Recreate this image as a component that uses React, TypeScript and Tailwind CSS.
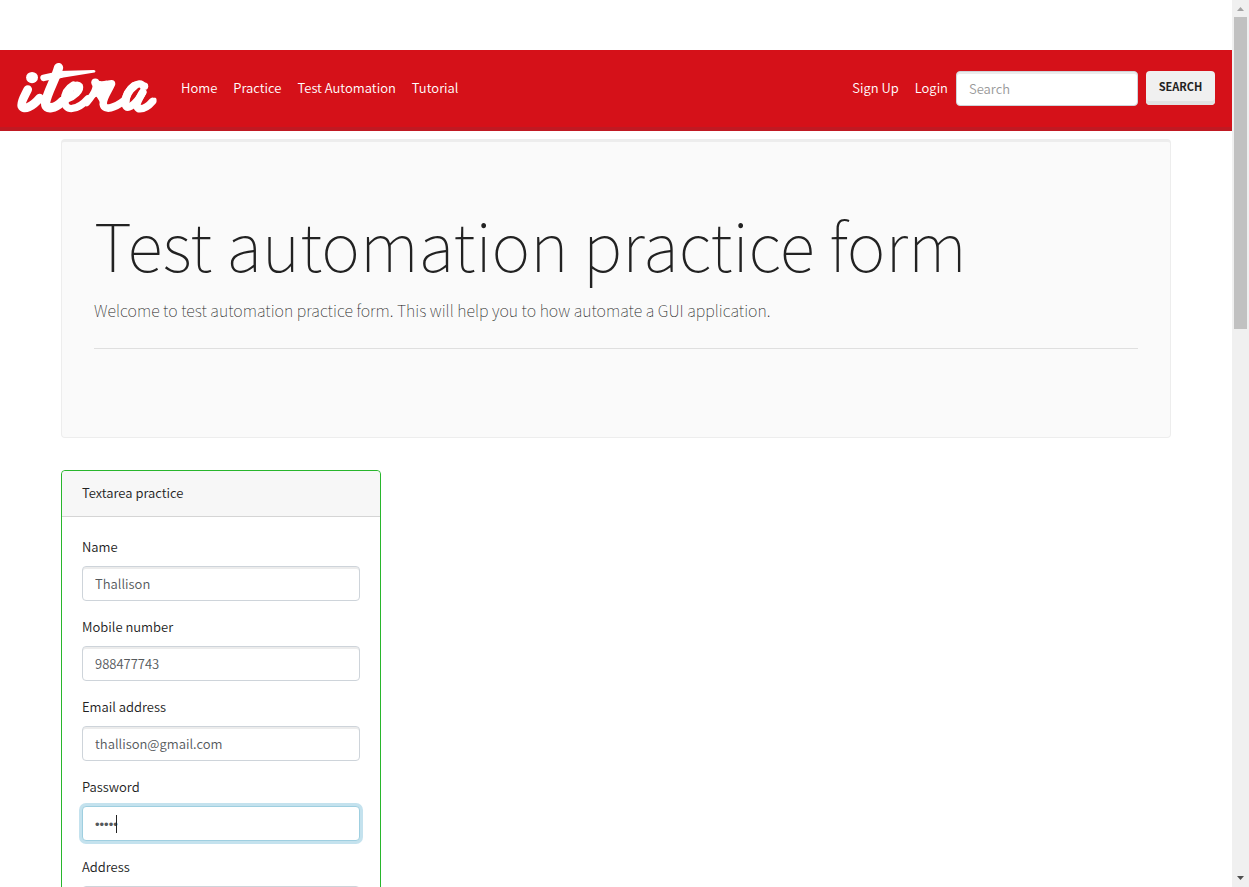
import React from "react";

const NAV_LINKS = ["Home", "Practice", "Test Automation", "Tutorial"];
const ACCOUNT_LINKS = ["Sign Up", "Login"];

const INPUT_CLASS =
  "block h-[35px] rounded border border-[#ced4da] bg-white px-3 text-[13px] text-[#55595c] shadow-[inset_0_2px_0_rgba(0,0,0,0.075)] outline-none placeholder:text-[#999] focus:border-[#9fcfe0] focus:shadow-[0_0_0_3px_rgba(21,140,186,0.25)]";

function Logo() {
  return (
    <svg viewBox="51 54 420 151" className="h-[50px] w-[140px]" role="img" aria-label="itera">
      <g fill="none" stroke="#fff" strokeLinecap="round" strokeLinejoin="round">
        <path strokeWidth="26" d="M82 134C74 152 60 172 64 184C70 198 96 186 118 160" />
        <path strokeWidth="28" d="M175 68C168 98 139 146 136 174C135 199 166 190 186 170" />
        <path strokeWidth="20" d="M130 99C147 94 160 92 180 90" />
        <path strokeWidth="22" d="M200 163C222 156 243 136 238 124C230 113 198 132 194 166C192 203 232 198 264 162" />
        <path strokeWidth="25" d="M194 168C194 145 204 131 220 122" />
        <path strokeWidth="21" d="M286 113C293 128 279 152 260 174" />
        <path strokeWidth="23" d="M298 133C309 124 322 117 335 117C328 134 308 160 310 178C314 200 345 190 376 166" />
        <path strokeWidth="22" d="M430 124C421 103 382 132 376 168C373 206 406 184 430 142" />
        <path strokeWidth="25" d="M377 176C376 155 388 134 404 123" />
        <path strokeWidth="23" d="M428 144C416 166 405 184 417 192C432 194 448 183 459 170" />
      </g>
      <g fill="#fff">
        <ellipse cx="95" cy="98" rx="18" ry="17" />
        <circle cx="286" cy="113" r="12" />
        <path d="M286 104Q300 112 320 107L338 120L300 172L290 156L280 160Z" />
        <circle cx="435" cy="124" r="11" />
        <path d="M175 78L282 75Q290 77 284 83L172 101Z" />
        <path d="M452 166L466 158Q473 160 470 168L453 186Z" />
      </g>
    </svg>
  );
}

function NavList({ labels }: { labels: string[] }) {
  return (
    <ul className="flex text-white">
      {labels.map((label) => (
        <li key={label}>
          <a href="#nav" className="block px-2 pb-[2px]">{label}</a>
        </li>
      ))}
    </ul>
  );
}

function Navbar() {
  return (
    <nav className="flex h-[81px] items-center bg-[#d51119] px-[17px] pb-1 shadow-[inset_0_-4px_0_#c01922]">
      <a href="#home" className="mr-4 pb-[2px]">
        <Logo />
      </a>
      <NavList labels={NAV_LINKS} />
      <div className="ml-auto">
        <NavList labels={ACCOUNT_LINKS} />
      </div>
      <form className="flex items-start gap-2" onSubmit={(e) => e.preventDefault()}>
        <input type="search" aria-label="Search" placeholder="Search" className={`${INPUT_CLASS} w-[182px]`} />
        <button
          type="submit"
          className="h-[34px] w-[69px] rounded bg-[#f0f0f0] pb-1 text-[11px] font-bold text-[#222] shadow-[inset_0_-4px_0_#e2e2e2]"
        >
          SEARCH
        </button>
      </form>
    </nav>
  );
}

type FieldProps = { id: string; label: string; type?: string; value?: string };

function Field({ id, label, type = "text", value = "" }: FieldProps) {
  return (
    <div className="mb-4">
      <label htmlFor={id} className="mb-[10px] block leading-[19px]">{label}</label>
      <input id={id} type={type} defaultValue={value} className={`${INPUT_CLASS} w-full`} />
    </div>
  );
}

function PasswordField() {
  return (
    <div className="mb-4">
      <label htmlFor="password" className="mb-[10px] block leading-[19px]">Password</label>
      <div className="relative">
        <input
          id="password"
          type="password"
          defaultValue="12345"
          autoFocus
          className={`${INPUT_CLASS} w-full pt-[2px] font-['Liberation_Sans',sans-serif] caret-transparent`}
        />
        <span aria-hidden="true" className="absolute top-[9px] left-[34px] h-[18px] w-px bg-[#222]" />
      </div>
    </div>
  );
}

function ScrollBar() {
  return (
    <div aria-hidden="true" className="flex w-[17px] shrink-0 flex-col items-center bg-[#f0f0f0]">
      <svg viewBox="0 0 17 17" className="h-[17px] w-[17px] shrink-0">
        <path d="M5 11L8.500 7L12 11Z" fill="#a3a3a3" />
      </svg>
      <div className="h-[312px] w-[13px] bg-[#c1c1c1]" />
      <svg viewBox="0 0 17 17" className="mt-auto h-[17px] w-[17px] shrink-0">
        <path d="M5 6L8.500 10L12 6Z" fill="#505050" />
      </svg>
    </div>
  );
}

export default function App() {
  return (
    <div className="flex h-screen overflow-hidden bg-white font-['Noto_Sans_CJK_SC','Noto_Sans',sans-serif] text-[13px] leading-[19px] font-[350] text-[#222]">
      <div className="min-w-0 flex-1 overflow-hidden pt-[50px]">
        <Navbar />
        <main className="mx-auto max-w-[1140px] px-[15px] pt-2">
          <header className="mb-8 rounded border border-t-[3px] border-[#ededed] bg-[#fafafa] px-8 pt-16 pb-[88px]">
            <h1 className="mb-[18px] text-[66px] leading-[74px] font-thin">Test automation practice form</h1>
            <p className="text-[16px] leading-6 font-thin">
              Welcome to test automation practice form. This will help you to how automate a GUI application.
            </p>
            <hr className="mt-[26px] border-[#dfdfdf]" />
          </header>
          <section className="w-[320px] rounded border border-[#28b62c]">
            <h2 className="rounded-t border-b border-[#d5d5d5] bg-[#f7f7f7] px-5 pt-3 pb-[14px]">Textarea practice</h2>
            <form className="p-5">
              <Field id="name" label="Name" value="Thallison" />
              <Field id="phone" label="Mobile number" value="988477743" />
              <Field id="email" label="Email address" type="email" value="thallison@gmail.com" />
              <PasswordField />
              <Field id="address" label="Address" />
            </form>
          </section>
        </main>
      </div>
      <ScrollBar />
    </div>
  );
}
